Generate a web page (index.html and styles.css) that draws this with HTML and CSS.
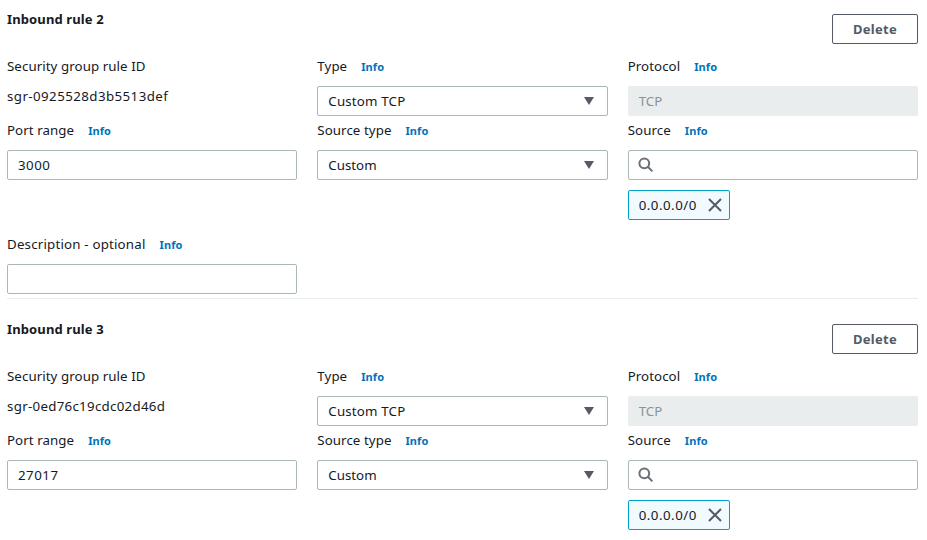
FILE: index.html
```html
<!DOCTYPE html>
<html lang="en">
<head>
<meta charset="utf-8">
<title>Inbound rules</title>
<link rel="stylesheet" href="styles.css">
</head>
<body>
<svg width="0" height="0" class="sprite" aria-hidden="true">
  <symbol id="search" viewBox="0 0 16 16"><circle cx="6.3" cy="6.3" r="4.9"/><path d="M9.8 9.8 14.4 14.4"/></symbol>
  <symbol id="close" viewBox="0 0 16 16"><path d="M2 2l12 12M14 2 2 14"/></symbol>
  <symbol id="caret" viewBox="0 0 12 10"><path d="M1 1h10L6 9z"/></symbol>
</svg>
<main class="rules">
  <section class="rule">
    <header class="rule-header"><h2 class="title">Inbound rule 2</h2><button class="delete">Delete</button></header>
    <div class="grid">
      <div class="field"><div class="label"><span>Security group rule ID</span></div><div class="value wide">sgr-0925528d3b5513def</div></div>
      <div class="field"><div class="label"><span>Type</span><a class="info">Info</a></div><div class="control"><span class="option">Custom TCP</span><svg class="caret"><use href="#caret"/></svg></div></div>
      <div class="field"><div class="label"><span>Protocol</span><a class="info">Info</a></div><div class="control disabled">TCP</div></div>
      <div class="field"><div class="label"><span>Port range</span><a class="info">Info</a></div><div class="control number">3000</div></div>
      <div class="field"><div class="label"><span>Source type</span><a class="info">Info</a></div><div class="control"><span>Custom</span><svg class="caret"><use href="#caret"/></svg></div></div>
      <div class="field source"><div class="label"><span>Source</span><a class="info">Info</a></div><div class="control"><svg class="search"><use href="#search"/></svg></div><div class="token"><span class="number">0.0.0.0/0</span><svg class="close"><use href="#close"/></svg></div></div>
      <div class="field"><div class="label"><span class="description">Description - optional</span><a class="info">Info</a></div><div class="control"></div></div>
    </div>
  </section>
  <section class="rule">
    <header class="rule-header"><h2 class="title">Inbound rule 3</h2><button class="delete">Delete</button></header>
    <div class="grid">
      <div class="field"><div class="label"><span>Security group rule ID</span></div><div class="value">sgr-0ed76c19cdc02d46d</div></div>
      <div class="field"><div class="label"><span>Type</span><a class="info">Info</a></div><div class="control"><span class="option">Custom TCP</span><svg class="caret"><use href="#caret"/></svg></div></div>
      <div class="field"><div class="label"><span>Protocol</span><a class="info">Info</a></div><div class="control disabled">TCP</div></div>
      <div class="field"><div class="label"><span>Port range</span><a class="info">Info</a></div><div class="control number">27017</div></div>
      <div class="field"><div class="label"><span>Source type</span><a class="info">Info</a></div><div class="control"><span>Custom</span><svg class="caret"><use href="#caret"/></svg></div></div>
      <div class="field source"><div class="label"><span>Source</span><a class="info">Info</a></div><div class="control"><svg class="search"><use href="#search"/></svg></div><div class="token"><span class="number">0.0.0.0/0</span><svg class="close"><use href="#close"/></svg></div></div>
    </div>
  </section>
</main>
</body>
</html>
```
FILE: styles.css
```css
* { box-sizing: border-box; }
body { margin: 0; background: #fff; color: #16191f; font: 13.3px/22px "Noto Sans", sans-serif; }
.sprite { display: none; }
.rules { padding: 0 9px 0 7px; }
.rule { padding-bottom: 4px; }
.rule + .rule { border-top: 1px solid #eaeded; padding-top: 10px; }
.rule-header { display: flex; justify-content: space-between; align-items: flex-start; height: 56px; padding-top: 8px; }
.rule + .rule .rule-header { height: 57px; padding-top: 9px; }
.title { margin: 0; font-size: 13px; line-height: 22px; font-weight: 700; letter-spacing: .12px; }
.delete { width: 86px; height: 30px; margin-top: 6px; padding: 0; border: 1px solid #545b64; border-radius: 2px; background: #fff; color: #545b64; font: 700 13px/28px "Noto Sans", sans-serif; letter-spacing: .25px; }
.grid { display: grid; grid-template-columns: repeat(3, minmax(0, 1fr)); gap: 4px 20px; }
.label { display: flex; height: 22px; margin-bottom: 8px; line-height: 20px; letter-spacing: .07px; white-space: nowrap; }
.label .description { letter-spacing: .19px; }
.info { margin-left: 14px; color: #0073bb; font-size: 11px; line-height: 22px; font-weight: 700; letter-spacing: .1px; }
.value { line-height: 20px; letter-spacing: .29px; }
.value.wide { letter-spacing: .43px; }
.number { letter-spacing: .5px; }
.option { letter-spacing: .18px; }
.control { display: flex; align-items: center; justify-content: space-between; height: 30px; padding: 0 10px; border: 1px solid #aab7b8; border-radius: 2px; }
.disabled { background: #eaeded; border-color: #eaeded; color: #879596; }
.source { padding-bottom: 10px; }
.caret { width: 12px; height: 10px; margin-right: 2px; fill: #545b64; }
.search { width: 16px; height: 16px; margin-left: -.5px; fill: none; stroke: #687078; stroke-width: 2; }
.token { display: flex; align-items: center; justify-content: space-between; width: 102px; height: 30px; margin-top: 10px; padding: 0 6px 0 10px; border: 1px solid #00a1c9; border-radius: 2px; background: #f1faff; }
.close { width: 16px; height: 16px; fill: none; stroke: #545b64; stroke-width: 2; }
```
